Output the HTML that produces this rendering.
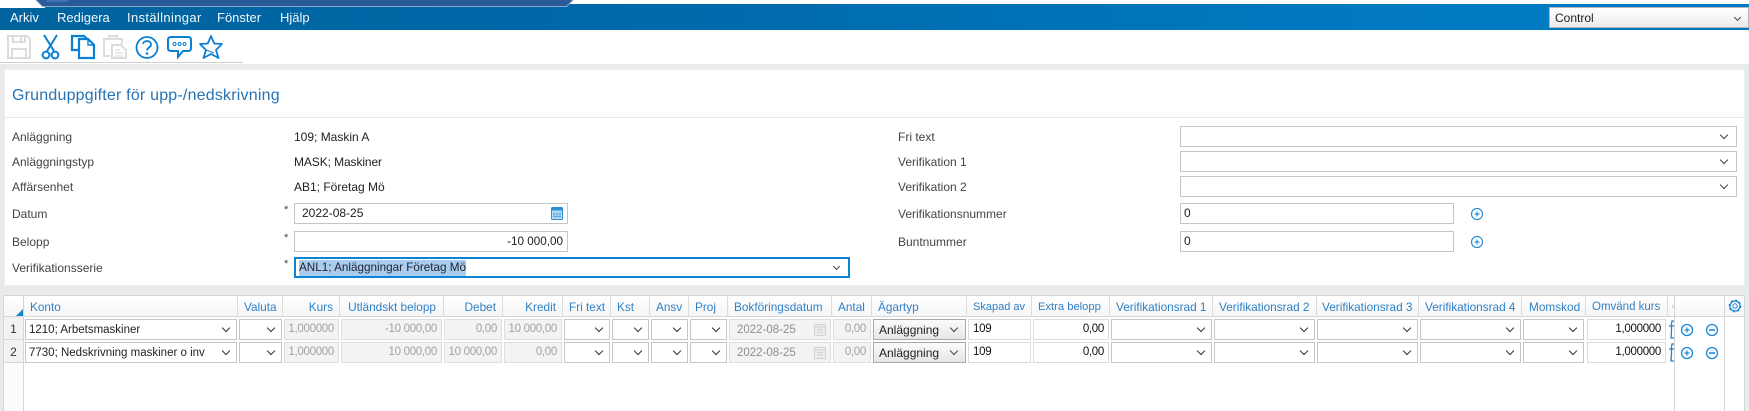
<!DOCTYPE html>
<html lang="sv"><head><meta charset="utf-8"><title>Grunduppgifter</title>
<style>
html,body{margin:0;padding:0;background:#e9eaec}
body{width:1749px;height:411px;overflow:hidden;position:relative;font-family:"Liberation Sans",sans-serif;font-size:12px;color:#222}
div,span,svg{position:absolute;box-sizing:border-box}
.t{white-space:nowrap;line-height:16px;height:16px}
.m{color:#fff;font-size:13px;top:10px;opacity:.95}
.l{color:#444;font-size:12px;left:12px}
.r{color:#444;font-size:12px;left:898px}
.v{color:#222;font-size:12px;left:294px}
.i{background:#fff;border:1px solid #c6c6c6;line-height:19px;white-space:nowrap}
.sel{background:#fff;border:1px solid #c6c6c6}
.sel:after{content:"";position:absolute;right:9px;top:5px;width:5px;height:5px;border-right:1.2px solid #444;border-bottom:1.2px solid #444;transform:rotate(45deg)}
.h{color:#2f80c5;font-size:11.8px;top:299px}
.hr{text-align:right}
.g{background:#fff;border:1px solid #c6c6c6;height:21px}
.g:after{content:"";position:absolute;right:7.5px;top:5px;width:5px;height:5px;border-right:1.4px solid #333;border-bottom:1.4px solid #333;transform:rotate(45deg)}
.a{top:319px}.b{top:342px}
.d{background:#f3f3f3;border:1px solid #dedede;color:#a2a2a2;height:21px;line-height:18px;text-align:right;padding-right:4px;white-space:nowrap;font-size:11.5px;letter-spacing:-.3px}
.w{background:#fff;border:1px solid #dcdcdc;color:#111;height:21px;line-height:18px;white-space:nowrap;font-size:11.5px;letter-spacing:-.3px}
.x{font-size:11.5px;color:#222;line-height:20px;padding-left:3px;white-space:nowrap}
.vl{background:#dcdcdc;width:1px;top:296px;height:21px}
.btn{background:linear-gradient(#fbfbfb,#e6e6e6);border:1px solid #a9a9a9;height:21px;font-size:12px;color:#222;line-height:20px;padding-left:5px}
.btn:after{content:"";position:absolute;right:8px;top:5px;width:5px;height:5px;border-right:1.3px solid #444;border-bottom:1.3px solid #444;transform:rotate(45deg)}
.dt{text-align:left;padding-left:7px;color:#8e8e8e;letter-spacing:0;line-height:20px}
</style></head>
<body>
<!-- top strip -->
<div style="left:0;top:0;width:1749px;height:8px;background:#fff"></div>
<div style="left:0;top:4px;width:1749px;height:26px;background:linear-gradient(to right,#00639e 0,#006aab 40%,#0079c1 78%,#007bc3 100%)"></div>
<div style="left:0;top:4px;width:45px;height:4px;background:#fff"></div>
<svg style="left:30px;top:0" width="550" height="9" viewBox="0 0 550 9">
<path d="M6 0L13 7H536L543 0Z" fill="#2a5a98"/>
<path d="M6 0L12.5 6.5H536.5L543 0" fill="none" stroke="#8ca6c8" stroke-width="1"/>
<rect x="16" y="0" width="22" height="2" fill="#3c72b8"/>
</svg>
<span class="t m" style="left:10px">Arkiv</span>
<span class="t m" style="left:57px">Redigera</span>
<span class="t m" style="left:127px;letter-spacing:.35px">Inställningar</span>
<span class="t m" style="left:217px">Fönster</span>
<span class="t m" style="left:280px">Hjälp</span>
<div style="left:1549px;top:7px;width:200px;height:21px;background:linear-gradient(#fff,#ececec);border:1px solid #b5b5b5;font-size:12px;line-height:21px;padding-left:5px;color:#222">Control</div>
<div style="left:1735px;top:15px;width:5px;height:5px;border-right:1.2px solid #444;border-bottom:1.2px solid #444;transform:rotate(45deg)"></div>

<!-- toolbar -->
<div style="left:0;top:30px;width:1749px;height:34px;background:#fff"></div>
<div style="left:0;top:62px;width:243px;height:1px;background:#cfcfcf"></div>
<svg style="left:0;top:30px" width="240" height="32" viewBox="0 0 240 32" fill="none">
<g stroke="#dcdcdc" stroke-width="2">
<path d="M8 6H27L30 9V28H8Z"/><path d="M13 6V12H25V6"/><path d="M21 7V11" stroke-width="2"/><path d="M12 28V19H26V28"/>
</g>
<g stroke="#0b80d2" stroke-width="2">
<path d="M44 5L54 21M57 5L47 21"/><circle cx="46" cy="25" r="3.4"/><circle cx="55" cy="25" r="3.4"/>
</g>
<g stroke="#0b80d2" stroke-width="2.2">
<path d="M79 20H72V6H84L87 9"/><path d="M79 9H88L94 15V28H79Z"/><path d="M88 9V15H94" stroke-width="1.4"/>
</g>
<g stroke="#dcdcdc" stroke-width="2">
<path d="M110 26H104V9H122V14"/><path d="M109 9V6H117V9"/><path d="M112 15H121L126 20V28H112Z"/><path d="M115 20H120M115 23H123M115 26H123" stroke-width="1.2"/>
</g>
<circle cx="147" cy="17.500" r="10.500" stroke="#0b80d2" stroke-width="1.800"/>
<path d="M143 14C143.500 10 151 10 151 14.500C151 17.500 147 17.500 147 20.500" stroke="#0b80d2" stroke-width="1.800"/>
<circle cx="147" cy="23.500" r="1.300" fill="#0b80d2"/>
<path d="M171 7H188Q191 7 191 10V18Q191 21 188 21H183L178 27V21H171Q168 21 168 18V10Q168 7 171 7Z" stroke="#0b80d2" stroke-width="2"/>
<circle cx="174.500" cy="14" r="1.500" stroke="#0b80d2"/><circle cx="179.500" cy="14" r="1.500" stroke="#0b80d2"/><circle cx="184.500" cy="14" r="1.500" stroke="#0b80d2"/>
<path d="M211 6L214.200 13.500L222 14L216 20L218.500 28L211 24L203.500 28L206 20L200 14L207.800 13.500Z" stroke="#0b80d2" stroke-width="1.800" stroke-linejoin="round"/>
<path d="M206 20L214 23" stroke="#0b80d2" stroke-width="1"/>
</svg>

<!-- panel -->
<div style="left:4px;top:69px;width:1741px;height:217px;background:#fff;border:1px solid #eceef0"></div>
<span class="t" style="left:12px;top:86px;height:20px;line-height:20px;font-size:16px;color:#2673b5;letter-spacing:.2px">Grunduppgifter för upp-/nedskrivning</span>
<div style="left:5px;top:117px;width:1739px;height:1px;background:#e8e8e8"></div>

<span class="t l" style="top:129px">Anläggning</span>
<span class="t l" style="top:154px">Anläggningstyp</span>
<span class="t l" style="top:179px">Affärsenhet</span>
<span class="t l" style="top:206px">Datum</span>
<span class="t l" style="top:234px">Belopp</span>
<span class="t l" style="top:260px">Verifikationsserie</span>
<span class="t v" style="top:129px">109; Maskin A</span>
<span class="t v" style="top:154px;letter-spacing:-.1px">MASK; Maskiner</span>
<span class="t v" style="top:179px">AB1; Företag Mö</span>
<span class="t" style="left:284px;top:202px;font-size:11px;color:#444">*</span>
<span class="t" style="left:284px;top:230px;font-size:11px;color:#444">*</span>
<span class="t" style="left:284px;top:256px;font-size:11px;color:#444">*</span>
<div class="i" style="left:294px;top:203px;width:274px;height:21px;padding-left:7px">2022-08-25</div>
<svg style="left:551px;top:207px" width="12" height="13" viewBox="0 0 12 13"><rect x=".5" y=".5" width="11" height="12" rx="1" fill="#bcdcf3" stroke="#2a8fd6"/><rect x=".5" y=".5" width="11" height="3" fill="#2a8fd6"/><path d="M3 5V11M6 5V11M9 5V11M2 7H10M2 9.500H10" stroke="#4ea3e0" stroke-width=".7"/></svg>
<div class="i" style="left:294px;top:231px;width:274px;height:21px;text-align:right;padding-right:4px;font-size:11.7px">-10 000,00</div>
<div style="left:294px;top:257px;width:556px;height:21px;border:2px solid #0a84d3;background:#fff"></div>
<span class="t" style="left:299px;top:260px;background:#a9cdee;color:#223;font-size:11.7px">ANL1; Anläggningar Företag Mö</span>
<div style="left:834px;top:264px;width:5px;height:5px;border-right:1.2px solid #444;border-bottom:1.2px solid #444;transform:rotate(45deg)"></div>

<span class="t r" style="top:129px">Fri text</span>
<span class="t r" style="top:154px">Verifikation 1</span>
<span class="t r" style="top:179px">Verifikation 2</span>
<span class="t r" style="top:206px">Verifikationsnummer</span>
<span class="t r" style="top:234px">Buntnummer</span>
<div class="sel" style="left:1180px;top:126px;width:557px;height:21px"></div>
<div class="sel" style="left:1180px;top:151px;width:557px;height:21px"></div>
<div class="sel" style="left:1180px;top:176px;width:557px;height:21px"></div>
<div class="i" style="left:1180px;top:203px;width:274px;height:21px;padding-left:3px">0</div>
<div class="i" style="left:1180px;top:231px;width:274px;height:21px;padding-left:3px">0</div>
<svg style="left:1470px;top:207px" width="14" height="14" viewBox="0 0 14 14" fill="none"><circle cx="7" cy="7" r="5.500" stroke="#2a8fd6" stroke-width="1.200"/><path d="M4.500 7H9.500M7 4.500V9.500" stroke="#2a8fd6" stroke-width="1.200"/></svg>
<svg style="left:1470px;top:235px" width="14" height="14" viewBox="0 0 14 14" fill="none"><circle cx="7" cy="7" r="5.500" stroke="#2a8fd6" stroke-width="1.200"/><path d="M4.500 7H9.500M7 4.500V9.500" stroke="#2a8fd6" stroke-width="1.200"/></svg>

<!-- grid -->
<div style="left:3px;top:295px;width:1742px;height:116px;background:#fff;border:1px solid #d6d6d6;border-bottom:0"></div>
<div style="left:4px;top:296px;width:1740px;height:21px;background:linear-gradient(#fff,#f6f6f6);border-bottom:1px solid #d6d6d6"></div>
<div style="left:4px;top:317px;width:19px;height:94px;background:#fbfbfb"></div>
<div style="left:4px;top:317px;width:19px;height:23px;background:#f2f2f2;border-bottom:1px solid #d6d6d6;font-size:12px;line-height:25px;text-align:center;color:#333">1</div>
<div style="left:4px;top:340px;width:19px;height:23px;background:#f2f2f2;border-bottom:1px solid #d6d6d6;font-size:12px;line-height:25px;text-align:center;color:#333">2</div>
<div style="left:23px;top:296px;width:1px;height:115px;background:#d6d6d6"></div>
<svg style="left:16px;top:309px" width="7" height="7" viewBox="0 0 7 7"><path d="M7 0V7H0Z" fill="#1583d0"/></svg>

<div class="vl" style="left:237px"></div><div class="vl" style="left:282px"></div><div class="vl" style="left:339px"></div><div class="vl" style="left:443px"></div><div class="vl" style="left:502px"></div><div class="vl" style="left:562px"></div><div class="vl" style="left:610px"></div><div class="vl" style="left:649px"></div><div class="vl" style="left:688px"></div><div class="vl" style="left:727px"></div><div class="vl" style="left:831px"></div><div class="vl" style="left:871px"></div><div class="vl" style="left:966px"></div><div class="vl" style="left:1031px"></div><div class="vl" style="left:1109px"></div><div class="vl" style="left:1212px"></div><div class="vl" style="left:1316px"></div><div class="vl" style="left:1418px"></div><div class="vl" style="left:1521px"></div><div class="vl" style="left:1585px"></div><div class="vl" style="left:1667px"></div>
<div style="left:1674px;top:296px;width:1px;height:115px;background:#d6d6d6"></div>
<div style="left:1724px;top:296px;width:1px;height:115px;background:#d6d6d6"></div>

<span class="t h" style="left:30px">Konto</span>
<span class="t h" style="left:244px">Valuta</span>
<span class="t h hr" style="left:283px;width:50px">Kurs</span>
<span class="t h hr" style="left:340px;width:96px">Utländskt belopp</span>
<span class="t h hr" style="left:444px;width:52px">Debet</span>
<span class="t h hr" style="left:504px;width:52px">Kredit</span>
<span class="t h" style="left:569px">Fri text</span>
<span class="t h" style="left:617px">Kst</span>
<span class="t h" style="left:656px">Ansv</span>
<span class="t h" style="left:695px">Proj</span>
<span class="t h" style="left:734px">Bokföringsdatum</span>
<span class="t h" style="left:838px">Antal</span>
<span class="t h" style="left:878px">Ägartyp</span>
<span class="t h" style="left:973px;font-size:11px">Skapad av</span>
<span class="t h" style="left:1038px;font-size:11.2px">Extra belopp</span>
<span class="t h" style="left:1116px">Verifikationsrad 1</span>
<span class="t h" style="left:1219px">Verifikationsrad 2</span>
<span class="t h" style="left:1322px">Verifikationsrad 3</span>
<span class="t h" style="left:1425px">Verifikationsrad 4</span>
<span class="t h" style="left:1529px">Momskod</span>
<span class="t h" style="left:1592px;font-size:11.5px">Omvänd kurs</span>
<div style="left:1672px;top:305px;width:2px;height:3px;background:#f6d8c6"></div>

<!-- row 1 -->
<div class="g a x" style="left:25px;width:212px">1210; Arbetsmaskiner</div>
<div class="g a" style="left:239px;width:43px"></div>
<div class="d a" style="left:284px;width:55px">1,000000</div>
<div class="d a" style="left:341px;width:101px">-10 000,00</div>
<div class="d a" style="left:444px;width:58px">0,00</div>
<div class="d a" style="left:504px;width:58px">10 000,00</div>
<div class="g a" style="left:564px;width:46px"></div>
<div class="g a" style="left:612px;width:37px"></div>
<div class="g a" style="left:651px;width:37px"></div>
<div class="g a" style="left:690px;width:37px"></div>
<div class="d a dt" style="left:729px;width:102px">2022-08-25</div>
<svg class="a" style="left:814px;margin-top:4px" width="12" height="13" viewBox="0 0 12 13" fill="none"><rect x=".5" y="1.500" width="11" height="11" rx="1" fill="#ececec" stroke="#d2d2d2"/><path d="M1 4H11M3 6.500H9M3 9H9" stroke="#d2d2d2"/></svg>
<div class="d a" style="left:833px;width:38px">0,00</div>
<div class="btn a" style="left:873px;width:93px">Anläggning</div>
<div class="w a" style="left:968px;width:63px;padding-left:4px">109</div>
<div class="w a" style="left:1033px;width:76px;text-align:right;padding-right:4px">0,00</div>
<div class="g a" style="left:1111px;width:101px"></div>
<div class="g a" style="left:1214px;width:101px"></div>
<div class="g a" style="left:1317px;width:101px"></div>
<div class="g a" style="left:1420px;width:101px"></div>
<div class="g a" style="left:1523px;width:61px"></div>
<div class="w a" style="left:1587px;width:79px;text-align:right;padding-right:4px">1,000000</div>

<!-- row 2 -->
<div class="g b x" style="left:25px;width:212px">7730; Nedskrivning maskiner o inv</div>
<div class="g b" style="left:239px;width:43px"></div>
<div class="d b" style="left:284px;width:55px">1,000000</div>
<div class="d b" style="left:341px;width:101px">10 000,00</div>
<div class="d b" style="left:444px;width:58px">10 000,00</div>
<div class="d b" style="left:504px;width:58px">0,00</div>
<div class="g b" style="left:564px;width:46px"></div>
<div class="g b" style="left:612px;width:37px"></div>
<div class="g b" style="left:651px;width:37px"></div>
<div class="g b" style="left:690px;width:37px"></div>
<div class="d b dt" style="left:729px;width:102px">2022-08-25</div>
<svg class="b" style="left:814px;margin-top:4px" width="12" height="13" viewBox="0 0 12 13" fill="none"><rect x=".5" y="1.500" width="11" height="11" rx="1" fill="#ececec" stroke="#d2d2d2"/><path d="M1 4H11M3 6.500H9M3 9H9" stroke="#d2d2d2"/></svg>
<div class="d b" style="left:833px;width:38px">0,00</div>
<div class="btn b" style="left:873px;width:93px">Anläggning</div>
<div class="w b" style="left:968px;width:63px;padding-left:4px">109</div>
<div class="w b" style="left:1033px;width:76px;text-align:right;padding-right:4px">0,00</div>
<div class="g b" style="left:1111px;width:101px"></div>
<div class="g b" style="left:1214px;width:101px"></div>
<div class="g b" style="left:1317px;width:101px"></div>
<div class="g b" style="left:1420px;width:101px"></div>
<div class="g b" style="left:1523px;width:61px"></div>
<div class="w b" style="left:1587px;width:79px;text-align:right;padding-right:4px">1,000000</div>

<!-- row icons -->
<svg style="left:1668px;top:318px" width="6" height="46" viewBox="0 0 6 46" fill="none" stroke="#1a86d4" stroke-width="1.300"><path d="M6 3H4L3.500 6V13L3 20H6M1 8H6"/><path d="M6 26H4L3.500 29V36L3 43H6M1 31H6"/></svg>
<svg style="left:1680px;top:318px" width="40" height="46" viewBox="0 0 40 46" fill="none" stroke="#1a8ad8" stroke-width="1.300">
<circle cx="7" cy="12" r="5.500"/><path d="M4.500 12H9.500M7 9.500V14.500"/>
<circle cx="32" cy="12" r="5.500"/><path d="M29 12H35" stroke-width="1.600"/>
<circle cx="7" cy="35" r="5.500"/><path d="M4.500 35H9.500M7 32.500V37.500"/>
<circle cx="32" cy="35" r="5.500"/><path d="M29 35H35" stroke-width="1.600"/>
</svg>
<svg style="left:1728px;top:299px" width="14" height="14" viewBox="0 0 14 14" fill="none" stroke="#1a86d4"><circle cx="7" cy="7" r="2.200"/><circle cx="7" cy="7" r="5" stroke-width="1.300"/><circle cx="7" cy="7" r="5.800" stroke-width="1.200" stroke-dasharray="2 2.550"/></svg>
</body></html>
